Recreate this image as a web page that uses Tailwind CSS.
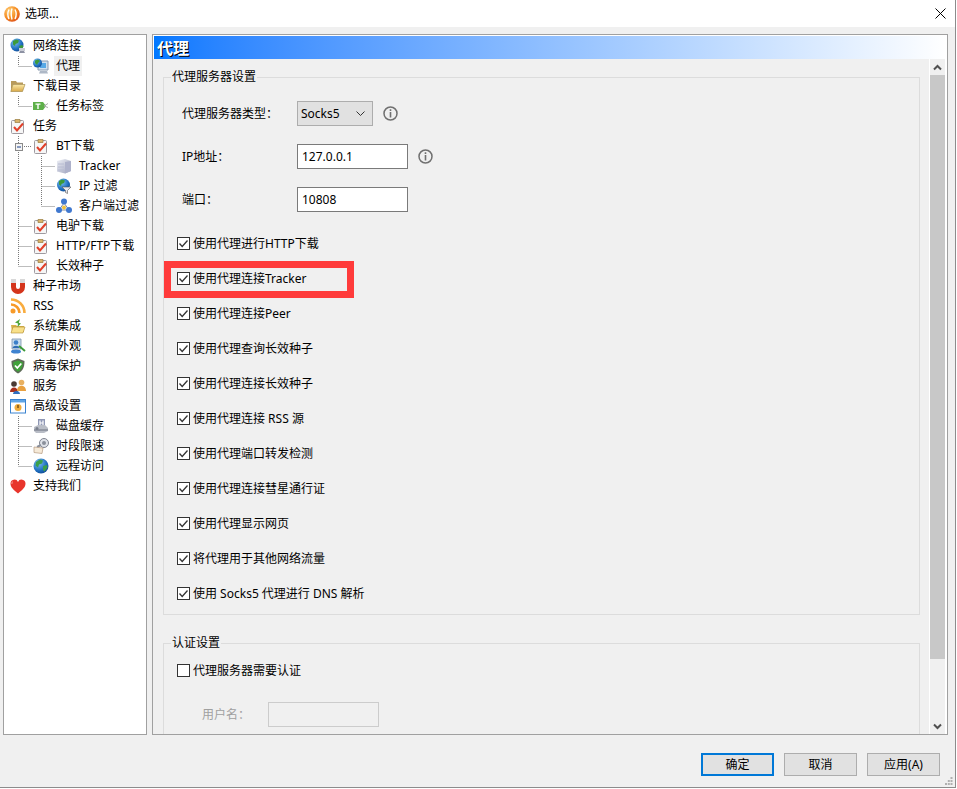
<!DOCTYPE html>
<html lang="zh-CN">
<head>
<meta charset="utf-8">
<title>选项...</title>
<script src="https://cdn.jsdelivr.net/npm/@tailwindcss/browser@4"></script>
</head>
<body class="bg-white">
<svg class="absolute w-0 h-0" width="0" height="0">
<defs>
<radialGradient id="ball" cx=".35" cy=".3" r=".8"><stop offset="0" stop-color="#ffd27a"/><stop offset=".6" stop-color="#f58a1f"/><stop offset="1" stop-color="#d8461a"/></radialGradient>
<radialGradient id="sea" cx=".35" cy=".3" r=".85"><stop offset="0" stop-color="#7cc0f0"/><stop offset=".6" stop-color="#1f6fc0"/><stop offset="1" stop-color="#0d3f85"/></radialGradient>
<linearGradient id="greybox" x1="0" y1="0" x2="1" y2="1"><stop offset="0" stop-color="#eef0f6"/><stop offset="1" stop-color="#9ea3bd"/></linearGradient>
<linearGradient id="fold" x1="0" y1="0" x2="0" y2="1"><stop offset="0" stop-color="#fbe9a8"/><stop offset="1" stop-color="#d8a848"/></linearGradient>
<symbol id="globe" viewBox="0 0 16 16"><circle cx="7" cy="7" r="6.500" fill="url(#sea)"/><path d="M3 3l3-1.500 3 1-1 2.500-2.500 1-.5 2-2-1.500zM9 8l3-1 1.500 1.500-2 3-1.500-1z" fill="#3d9a3a"/><path d="M9 10h6v3H9z" fill="#c9ccd6"/><path d="M10 13h4l1 2H9z" fill="#8d92a3"/></symbol>
<symbol id="proxy" viewBox="0 0 16 16"><path d="M5 3h10v9H5z" fill="#cfe0ef" stroke="#8b9bb0"/><path d="M7 5h6v5H7z" fill="#58a9e6"/><path d="M7 13h7l1 2.500H6z" fill="#aeb8c6"/><circle cx="4.500" cy="5" r="4.500" fill="url(#sea)"/><path d="M2 2.500l3-1 2 1.500-2 2-1 2-2-2z" fill="#3d9a3a"/></symbol>
<symbol id="folder" viewBox="0 0 16 16"><path d="M1 3h5l1 1.500h6v2H3L1 13z" fill="#b89a5a"/><path d="M3 6.500h12L12.500 13.500H.8z" fill="url(#fold)" stroke="#9a8140" stroke-width=".6"/></symbol>
<symbol id="tag" viewBox="0 0 16 16"><path d="M0 4h10l3 4-3 4H0z" fill="#5eb04a"/><path d="M2.500 5.500h5v1.300H5.700V11H4.300V6.800H2.500z" fill="#fff"/><path d="M11 8l4-2.500M11 8l4 1.500" stroke="#a8a8a8" fill="none"/></symbol>
<symbol id="clip" viewBox="0 0 16 16"><rect x="1.500" y="2.500" width="12" height="13" rx="1" fill="#f6f6f6" stroke="#9e9aa0"/><path d="M5 1.500h5v3H5z" fill="#d9b36b" stroke="#9a7d40" stroke-width=".7"/><path d="M4 9l3 3.500L13 5.500" fill="none" stroke="#e0402a" stroke-width="2"/></symbol>
<symbol id="server" viewBox="0 0 16 16"><path d="M1 3l8-2 6 2v10l-6 2.500-8-2z" fill="url(#greybox)"/><path d="M9 4l6-1v10l-6 2.500z" fill="#aeb2cb"/><path d="M2 6h6M2 9h6M2 12h6" stroke="#b8bcd2"/></symbol>
<symbol id="funnel" viewBox="0 0 16 16"><circle cx="7.500" cy="7" r="6.500" fill="url(#sea)"/><path d="M3 3l3-1.500 3 1-1 2.500-2.500 1-.5 2-2-1.500z" fill="#3d9a3a"/><path d="M6 9h9l-3.500 3.500v3l-2-1v-2z" fill="#e8e8ee" stroke="#555" stroke-width=".6"/></symbol>
<symbol id="nodes" viewBox="0 0 16 16"><path d="M8 5L3 12M8 5l5 7M3 12h10" stroke="#7f8ba8"/><circle cx="8" cy="3.500" r="3" fill="#3f78cf"/><circle cx="3" cy="12" r="3" fill="#3f78cf"/><circle cx="13" cy="12" r="3" fill="#3f78cf"/><circle cx="8" cy="9.500" r="2" fill="#f2c23a"/></symbol>
<symbol id="magnet" viewBox="0 0 16 16"><path d="M1 1h5v8a2 2 0 0 0 4 0V1h5v8a7 7 0 0 1-14 0z" fill="#d4351c"/><path d="M1 1h5v4H1zM10 1h5v4h-5z" fill="#d8d8d8"/></symbol>
<symbol id="rss" viewBox="0 0 16 16"><circle cx="3" cy="13" r="2.500" fill="#f79a28"/><path d="M1 6.500A8.500 8.500 0 0 1 9.500 15" fill="none" stroke="#f79a28" stroke-width="2.600"/><path d="M1 1.500A13.500 13.500 0 0 1 14.500 15" fill="none" stroke="#f9ac3e" stroke-width="2.600"/></symbol>
<symbol id="foldarrow" viewBox="0 0 16 16"><path d="M1 7h5l1 1h7v6H2z" fill="#d8b24a"/><path d="M3 9h12l-2 6H1z" fill="#f8e08a" stroke="#b08a30" stroke-width=".6"/><path d="M10 1L5 4.500 8 5.500 7.500 9 11 5.500 8.800 4.800z" fill="#4fa53c"/></symbol>
<symbol id="ui" viewBox="0 0 16 16"><path d="M2 1h9v10H2z" fill="#c7dced" stroke="#7e93ad" stroke-width=".8"/><circle cx="6" cy="4.500" r="2.300" fill="#3b7fc9"/><path d="M2.500 10c.5-3 6.500-3 7 0z" fill="#2e6cb5"/><ellipse cx="6" cy="13.500" rx="5" ry="2" fill="#3f83d0"/><path d="M9 8l6 5" stroke="#3c9a3a" stroke-width="2"/></symbol>
<symbol id="shield" viewBox="0 0 16 16"><path d="M8 .5l6.500 2.500c0 6-1.500 10-6.500 12.500C3 13 1.500 9 1.500 3z" fill="#5e6a58"/><path d="M8 2.500l4.800 1.800c0 4.500-1 7.500-4.800 9.500-3.800-2-4.800-5-4.800-9.500z" fill="#3fa23a"/><path d="M5 7.500L7.300 10 11.300 5.500" fill="none" stroke="#fff" stroke-width="1.800"/></symbol>
<symbol id="people" viewBox="0 0 16 16"><circle cx="4" cy="6" r="2.800" fill="#4a3a34"/><path d="M0 14c0-6 8-6 8 0z" fill="#a8301e"/><circle cx="11.500" cy="4.500" r="2.800" fill="#e8b060"/><path d="M7 13c0-7 9-7 9 0z" fill="#e8a040"/><path d="M3 16c0-4 7-4 7 0z" fill="#2f6fc0"/></symbol>
<symbol id="adv" viewBox="0 0 16 16"><rect x=".5" y="1.500" width="15" height="13.500" fill="#fff" stroke="#3a83d0"/><rect x="1" y="2" width="14" height="2.500" fill="#5fa5e6"/><circle cx="8" cy="9.500" r="3.500" fill="#efac3a"/><path d="M8 7v3" stroke="#5a3a10" stroke-width="1.200"/></symbol>
<symbol id="disk" viewBox="0 0 16 16"><path d="M5 1h7v8H5z" fill="#8f97b5"/><path d="M7 2.500v5M10 2.500v5M7 5h3" stroke="#fff" stroke-width="1.200"/><path d="M1 9l4-2h7l3 3v3l-4 2H3L1 13z" fill="#b9bdc6"/><path d="M1 12h14" stroke="#6d7280"/><circle cx="4" cy="10.500" r="1.500" fill="#7a7f8c"/></symbol>
<symbol id="key" viewBox="0 0 16 16"><circle cx="11" cy="5" r="4.500" fill="#dfe2e8" stroke="#7f8490"/><circle cx="11" cy="5" r="2" fill="#8a8f9a"/><path d="M8 7L4 9" stroke="#8a8f9a" stroke-width="2"/><path d="M1 9l9 1-1 5.500-8-1z" fill="#f6ead8" stroke="#b59a80" stroke-width=".7"/></symbol>
<symbol id="globe2" viewBox="0 0 16 16"><circle cx="8" cy="8" r="7.500" fill="url(#sea)"/><path d="M3 4l4-2.500 3 1-1 3-3 1-1 3-2.500-2zM10 8l4-1 .5 2.500-3 4-1.500-1.500z" fill="#3aa04a"/></symbol>
<symbol id="heart" viewBox="0 0 16 16"><path d="M8 15.500C3 11.500.5 9 .5 5.500A3.900 3.900 0 0 1 8 4a3.900 3.900 0 0 1 7.500 1.500C15.500 9 13 11.500 8 15.500z" fill="#e8352c"/><path d="M3 3.500c-1 .5-1.300 1.500-1 2.500" stroke="#f9a8a0" fill="none"/></symbol>
<symbol id="info" viewBox="0 0 15 15"><circle cx="7.500" cy="7.500" r="6.500" fill="none" stroke="#707070" stroke-width="1.500"/><path d="M6.700 3.300h1.600v1.600H6.700zM6.700 6h1.600v5.500H6.700z" fill="#707070"/></symbol>
<symbol id="checked" viewBox="0 0 13 13"><rect x=".5" y=".5" width="12" height="12" fill="#fff" stroke="#333"/><path d="M2.500 6.500L5.200 9.500 10.500 3.500" fill="none" stroke="#333" stroke-width="1.300"/></symbol>
</defs>
</svg>

<div class="w-[956px] h-[788px] overflow-hidden relative flex flex-col border-r border-b border-[#8c8c8c] text-[12px] leading-4 text-black font-['Noto_Sans','Noto_Sans_CJK_SC',sans-serif]">
  <div class="h-[27px] bg-white flex items-center shrink-0 pl-1 pr-[9px]">
    <svg class="w-4 h-4" viewBox="0 0 16 16"><circle cx="8" cy="8" r="7.800" fill="url(#ball)"/><path d="M8 2.500c-1 3-1 7 0 11M5 3.500c-1.500 3-1.500 6.500 0 9.500M11 3.500c1.500 3 1.500 6.500 0 9.500" stroke="#fff" stroke-width="1.400" fill="none"/></svg>
    <span class="ml-[5px]">选项...</span>
    <svg class="ml-auto w-[11px] h-[11px]" viewBox="0 0 11 11"><path d="M.5.500l10 10M10.500.500l-10 10" stroke="#000" stroke-width="1"/></svg>
  </div>

  <div class="flex-1 bg-[#f0f0f0] flex flex-col min-h-0">
    <div class="flex gap-[5px] pl-[3px] pt-[7px] h-[708px] shrink-0">
      <!-- tree -->
      <div class="relative w-[144px] h-[701px] bg-white border border-[#a0a0a0] overflow-hidden">
        <svg class="absolute left-0 top-0" width="142" height="500" viewBox="4 35 142 500">
          <g stroke="#7a7a7a" stroke-width="1" stroke-dasharray="1 1" fill="none">
            <path d="M18.500 56v10M18.500 66.500h14M18.500 96v10M18.500 106.500h14M18.500 136v8M18.500 152v114M22 146.500h10M18.500 226.500h14M18.500 246.500h14M18.500 266.500h14M41.500 156v50M41.500 166.500h14M41.500 186.500h14M41.500 206.500h14M18.500 416v50M18.500 426.500h14M18.500 446.500h14M18.500 466.500h14"/>
          </g>
          <rect x="15.500" y="143.500" width="7" height="7" fill="#f4f4f4" stroke="#8a8a8a"/>
          <path d="M17 147h4" stroke="#1a3e8a" stroke-width="1"/>
        </svg>
        <div class="relative flex flex-col pt-px">
          <div class="h-5 flex items-center pl-[6px] gap-[7px]"><svg class="w-4 h-4 shrink-0"><use href="#globe"/></svg><span>网络连接</span></div>
          <div class="h-5 flex items-center pl-[29px] gap-[5px]"><svg class="w-4 h-4 shrink-0"><use href="#proxy"/></svg><span class="bg-[#f0f0f0] h-5 flex items-center px-[2px] w-[28px]">代理</span></div>
          <div class="h-5 flex items-center pl-[6px] gap-[7px]"><svg class="w-4 h-4 shrink-0"><use href="#folder"/></svg><span>下载目录</span></div>
          <div class="h-5 flex items-center pl-[29px] gap-[7px]"><svg class="w-4 h-4 shrink-0"><use href="#tag"/></svg><span>任务标签</span></div>
          <div class="h-5 flex items-center pl-[6px] gap-[7px]"><svg class="w-4 h-4 shrink-0"><use href="#clip"/></svg><span>任务</span></div>
          <div class="h-5 flex items-center pl-[29px] gap-[7px]"><svg class="w-4 h-4 shrink-0"><use href="#clip"/></svg><span>BT下载</span></div>
          <div class="h-5 flex items-center pl-[52px] gap-[7px]"><svg class="w-4 h-4 shrink-0"><use href="#server"/></svg><span>Tracker</span></div>
          <div class="h-5 flex items-center pl-[52px] gap-[7px]"><svg class="w-4 h-4 shrink-0"><use href="#funnel"/></svg><span>IP 过滤</span></div>
          <div class="h-5 flex items-center pl-[52px] gap-[7px]"><svg class="w-4 h-4 shrink-0"><use href="#nodes"/></svg><span>客户端过滤</span></div>
          <div class="h-5 flex items-center pl-[29px] gap-[7px]"><svg class="w-4 h-4 shrink-0"><use href="#clip"/></svg><span>电驴下载</span></div>
          <div class="h-5 flex items-center pl-[29px] gap-[7px]"><svg class="w-4 h-4 shrink-0"><use href="#clip"/></svg><span>HTTP/FTP下载</span></div>
          <div class="h-5 flex items-center pl-[29px] gap-[7px]"><svg class="w-4 h-4 shrink-0"><use href="#clip"/></svg><span>长效种子</span></div>
          <div class="h-5 flex items-center pl-[6px] gap-[7px]"><svg class="w-4 h-4 shrink-0"><use href="#magnet"/></svg><span>种子市场</span></div>
          <div class="h-5 flex items-center pl-[6px] gap-[7px]"><svg class="w-4 h-4 shrink-0"><use href="#rss"/></svg><span>RSS</span></div>
          <div class="h-5 flex items-center pl-[6px] gap-[7px]"><svg class="w-4 h-4 shrink-0"><use href="#foldarrow"/></svg><span>系统集成</span></div>
          <div class="h-5 flex items-center pl-[6px] gap-[7px]"><svg class="w-4 h-4 shrink-0"><use href="#ui"/></svg><span>界面外观</span></div>
          <div class="h-5 flex items-center pl-[6px] gap-[7px]"><svg class="w-4 h-4 shrink-0"><use href="#shield"/></svg><span>病毒保护</span></div>
          <div class="h-5 flex items-center pl-[6px] gap-[7px]"><svg class="w-4 h-4 shrink-0"><use href="#people"/></svg><span>服务</span></div>
          <div class="h-5 flex items-center pl-[6px] gap-[7px]"><svg class="w-4 h-4 shrink-0"><use href="#adv"/></svg><span>高级设置</span></div>
          <div class="h-5 flex items-center pl-[29px] gap-[7px]"><svg class="w-4 h-4 shrink-0"><use href="#disk"/></svg><span>磁盘缓存</span></div>
          <div class="h-5 flex items-center pl-[29px] gap-[7px]"><svg class="w-4 h-4 shrink-0"><use href="#key"/></svg><span>时段限速</span></div>
          <div class="h-5 flex items-center pl-[29px] gap-[7px]"><svg class="w-4 h-4 shrink-0"><use href="#globe2"/></svg><span>远程访问</span></div>
          <div class="h-5 flex items-center pl-[6px] gap-[7px]"><svg class="w-4 h-4 shrink-0"><use href="#heart"/></svg><span>支持我们</span></div>
        </div>
      </div>

      <!-- panel -->
      <div class="w-[796px] h-[701px] border border-[#a0a0a0] bg-[#f0f0f0] flex flex-col overflow-hidden">
        <div class="h-px bg-white shrink-0"></div>
        <div class="h-[23px] shrink-0 border-l border-white bg-gradient-to-r from-[#0078ff] to-white flex items-center pl-[3px] text-[16px] font-bold text-white [text-shadow:1px_1px_0_#000]">代理</div>
        <div class="flex flex-1 min-h-0">
          <div class="w-[776px] h-full overflow-hidden pt-[10px] pl-[10px] shrink-0">
            <fieldset class="w-[757px] border border-[#dcdcdc] pb-[11px]">
              <legend class="ml-[7px] px-px leading-4">代理服务器设置</legend>
              <div class="mt-4 pl-[18px] flex items-center h-[25px]">
                <span class="w-[115px]">代理服务器类型：</span>
                <div class="w-[76px] h-[25px] bg-[#e1e1e1] border border-[#adadad] flex items-center justify-between pl-[3px] pr-[7px]"><span>Socks5</span><svg class="w-[9px] h-[6px]" viewBox="0 0 9 6"><path d="M.5.500L4.500 4.500 8.500.500" fill="none" stroke="#333"/></svg></div>
                <svg class="w-[15px] h-[15px] ml-[10px]"><use href="#info"/></svg>
              </div>
              <div class="mt-[18px] pl-[18px] flex items-center h-[25px]">
                <span class="w-[115px]">IP地址：</span>
                <div class="w-[111px] h-[25px] bg-white border border-[#7a7a7a] flex items-center pl-1">127.0.0.1</div>
                <svg class="w-[15px] h-[15px] ml-[10px]"><use href="#info"/></svg>
              </div>
              <div class="mt-[18px] pl-[18px] flex items-center h-[25px]">
                <span class="w-[115px]">端口：</span>
                <div class="w-[111px] h-[25px] bg-white border border-[#7a7a7a] flex items-center pl-1">10808</div>
              </div>
              <div class="mt-[21px] pl-[13px] flex flex-col gap-[15px]">
                <label class="h-5 flex items-center gap-[3px]"><svg class="w-[13px] h-[13px]"><use href="#checked"/></svg><span class="pt-[2px]">使用代理进行HTTP下载</span></label>
                <label class="h-5 flex items-center gap-[3px] relative"><span class="absolute left-[-13px] top-[-7px] w-[190px] h-[37px] border-[7px] border-[#ff3b3b]"></span><svg class="w-[13px] h-[13px]"><use href="#checked"/></svg><span class="pt-[2px]">使用代理连接Tracker</span></label>
                <label class="h-5 flex items-center gap-[3px]"><svg class="w-[13px] h-[13px]"><use href="#checked"/></svg><span class="pt-[2px]">使用代理连接Peer</span></label>
                <label class="h-5 flex items-center gap-[3px]"><svg class="w-[13px] h-[13px]"><use href="#checked"/></svg><span class="pt-[2px]">使用代理查询长效种子</span></label>
                <label class="h-5 flex items-center gap-[3px]"><svg class="w-[13px] h-[13px]"><use href="#checked"/></svg><span class="pt-[2px]">使用代理连接长效种子</span></label>
                <label class="h-5 flex items-center gap-[3px]"><svg class="w-[13px] h-[13px]"><use href="#checked"/></svg><span class="pt-[2px]">使用代理连接 RSS 源</span></label>
                <label class="h-5 flex items-center gap-[3px]"><svg class="w-[13px] h-[13px]"><use href="#checked"/></svg><span class="pt-[2px]">使用代理端口转发检测</span></label>
                <label class="h-5 flex items-center gap-[3px]"><svg class="w-[13px] h-[13px]"><use href="#checked"/></svg><span class="pt-[2px]">使用代理连接彗星通行证</span></label>
                <label class="h-5 flex items-center gap-[3px]"><svg class="w-[13px] h-[13px]"><use href="#checked"/></svg><span class="pt-[2px]">使用代理显示网页</span></label>
                <label class="h-5 flex items-center gap-[3px]"><svg class="w-[13px] h-[13px]"><use href="#checked"/></svg><span class="pt-[2px]">将代理用于其他网络流量</span></label>
                <label class="h-5 flex items-center gap-[3px]"><svg class="w-[13px] h-[13px]"><use href="#checked"/></svg><span class="pt-[2px]">使用 Socks5 代理进行 DNS 解析</span></label>
              </div>
            </fieldset>
            <fieldset class="mt-5 w-[757px] border border-[#dcdcdc] pb-10">
              <legend class="ml-[7px] px-px leading-4">认证设置</legend>
              <label class="mt-[9px] ml-[13px] h-5 flex items-center gap-[3px]"><span class="w-[13px] h-[13px] bg-white border border-[#333]"></span><span class="pt-[2px]">代理服务器需要认证</span></label>
              <div class="mt-[22px] pl-[38px] flex items-center h-[25px] text-[#a0a0a0]">
                <span class="w-[66px]">用户名：</span>
                <div class="w-[111px] h-[25px] bg-[#f0f0f0] border border-[#cccccc]"></div>
              </div>
            </fieldset>
          </div>
          <!-- scrollbar -->
          <div class="w-[18px] h-full shrink-0 border-l border-r-2 border-white flex flex-col">
            <div class="h-4 shrink-0 flex items-center justify-center"><svg class="w-[9px] h-[7px]" viewBox="0 0 9 7"><path d="M1 5.500L4.500 2 8 5.500" fill="none" stroke="#505050" stroke-width="2"/></svg></div>
            <div class="h-[584px] shrink-0 bg-[#c8c8c8]"></div>
            <div class="flex-1"></div>
            <div class="h-4 shrink-0 flex items-center justify-center"><svg class="w-[9px] h-[7px]" viewBox="0 0 9 7"><path d="M1 1.500L4.500 5 8 1.500" fill="none" stroke="#505050" stroke-width="2"/></svg></div>
          </div>
        </div>
      </div>
    </div>

    <!-- footer -->
    <div class="relative flex-1 flex justify-end gap-[10px] pt-[18px] pr-[15px]">
      <button class="w-[73px] h-[23px] bg-[#e1e1e1] border-2 border-[#0078d7] flex items-center justify-center">确定</button>
      <button class="w-[73px] h-[23px] bg-[#e1e1e1] border border-[#adadad] flex items-center justify-center">取消</button>
      <button class="w-[73px] h-[23px] bg-[#e1e1e1] border border-[#adadad] flex items-center justify-center">应用(A)</button>
      <svg class="absolute right-[2px] bottom-[2px] w-[8px] h-[8px]" viewBox="0 0 8 8"><path d="M5.500 0h2v2h-2zM2.800 3h2v2h-2zM5.500 3h2v2h-2zM0 6h2v2H0zM2.800 6h2v2h-2zM5.500 6h2v2h-2z" fill="#b0b0b0"/></svg>
    </div>
  </div>
</div>
</body>
</html>
